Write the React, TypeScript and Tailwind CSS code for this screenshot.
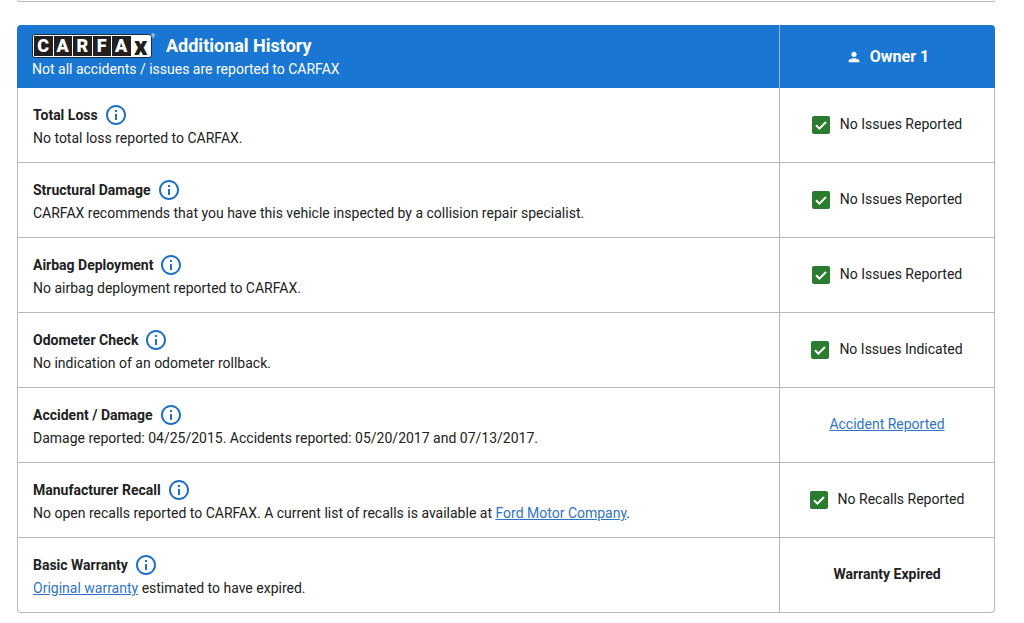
import React from 'react'
import { MdInfoOutline, MdPerson } from 'react-icons/md'

type Row = {
  title: string
  text: React.ReactNode
  status: React.ReactNode
}

const linkClass = 'text-[#3075c4] underline'

const CarfaxLogo = () => (
  <div className="relative w-[120px] rounded-[3px] border border-[#1c2d40] bg-white p-px" aria-label="CARFAX">
    <div className="grid h-5 grid-cols-6 gap-px text-center font-['Roboto'] text-lg leading-5 font-black text-white">
      {['C', 'A', 'R', 'F', 'A'].map((letter, i) => (
        <span key={i} className="bg-[#231f20]">{letter}</span>
      ))}
      <span className="bg-white text-[26px] leading-5 text-[#231f20]">x</span>
    </div>
    <span className="absolute -top-px left-full text-[5px] leading-none text-white">®</span>
  </div>
)

const Passed = ({ label }: { label: string }) => (
  <div className="flex items-center justify-center gap-2.5">
    <svg className="mt-px h-[18px] w-[18px]" viewBox="0 0 18 18" aria-hidden="true">
      <rect width="18" height="18" rx="2" fill="#2a7d2e" />
      <path d="M4 9.3 7.4 12.7 14 6" fill="none" stroke="#fff" strokeWidth="2" />
    </svg>
    {label}
  </div>
)

const rows: Row[] = [
  {
    title: 'Total Loss',
    text: 'No total loss reported to CARFAX.',
    status: <Passed label="No Issues Reported" />,
  },
  {
    title: 'Structural Damage',
    text: 'CARFAX recommends that you have this vehicle inspected by a collision repair specialist.',
    status: <Passed label="No Issues Reported" />,
  },
  {
    title: 'Airbag Deployment',
    text: 'No airbag deployment reported to CARFAX.',
    status: <Passed label="No Issues Reported" />,
  },
  {
    title: 'Odometer Check',
    text: 'No indication of an odometer rollback.',
    status: <Passed label="No Issues Indicated" />,
  },
  {
    title: 'Accident / Damage',
    text: 'Damage reported: 04/25/2015. Accidents reported: 05/20/2017 and 07/13/2017.',
    status: <a href="#accidents" className={linkClass}>Accident Reported</a>,
  },
  {
    title: 'Manufacturer Recall',
    text: (
      <>
        No open recalls reported to CARFAX. A current list of recalls is available at{' '}
        <a href="#ford" className={linkClass}>Ford Motor Company</a>.
      </>
    ),
    status: <Passed label="No Recalls Reported" />,
  },
  {
    title: 'Basic Warranty',
    text: (
      <>
        <a href="#warranty" className={linkClass}>Original warranty</a> estimated to have expired.
      </>
    ),
    status: <strong className="font-bold">Warranty Expired</strong>,
  },
]

export default function App() {
  return (
    <main className="bg-white pr-[29px] pb-2.5 pl-[17px] font-['Roboto',sans-serif] text-sm text-[#212121]">
      {/* End of the previous section */}
      <div className="mb-[23px] h-0.5 rounded-b border-x border-b border-[#b8b8b8]" />

      <table className="w-full border-separate border-spacing-0">
        <thead>
          <tr className="h-[63px] text-white">
            <th className="rounded-tl border-r border-[#8fbae8] bg-[#1976d2] py-0 pr-4 pl-[15px] text-left font-normal">
              <div className="flex items-center gap-3.5">
                <CarfaxLogo />
                <h2 className="text-lg leading-6 font-bold">Additional History</h2>
              </div>
              <p className="leading-[22px]">Not all accidents / issues are reported to CARFAX</p>
            </th>
            <th className="w-[215px] rounded-tr bg-[#1976d2] p-0">
              <div className="flex items-center justify-center gap-2 text-base font-bold">
                <MdPerson className="h-4 w-4" />
                Owner 1
              </div>
            </th>
          </tr>
        </thead>
        <tbody>
          {rows.map((row, i) => {
            const last = i === rows.length - 1
            return (
              <tr key={row.title} className="h-[75px]">
                <td className={`border-x border-b border-[#b8b8b8] pt-0.5 pb-0 pl-[15px] ${last ? 'rounded-bl' : ''}`}>
                  <div className="flex items-center gap-1.5">
                    <h3 className="font-bold">{row.title}</h3>
                    <button type="button" aria-label={`About ${row.title}`} className="text-[#1f6fc4]">
                      <MdInfoOutline className="h-6 w-6" />
                    </button>
                  </div>
                  <p className="leading-[22px]">{row.text}</p>
                </td>
                <td className={`border-r border-b border-[#b8b8b8] pt-0 pb-0.5 text-center ${last ? 'rounded-br' : ''}`}>
                  {row.status}
                </td>
              </tr>
            )
          })}
        </tbody>
      </table>
    </main>
  )
}
